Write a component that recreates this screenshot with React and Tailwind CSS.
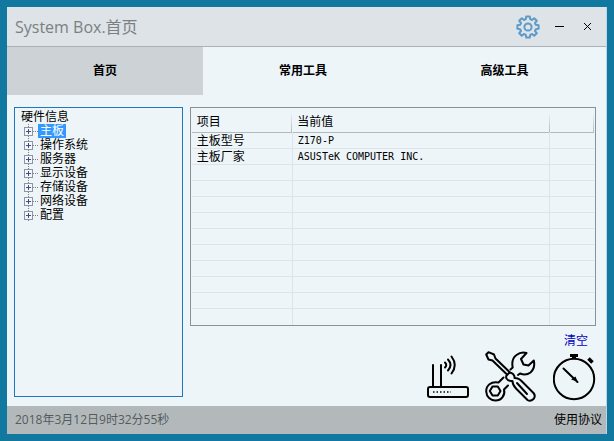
import React, { useState } from "react";

const tabs = ["首页", "常用工具", "高级工具"];

const hardware = [
  "主板",
  "操作系统",
  "服务器",
  "显示设备",
  "存储设备",
  "网络设备",
  "配置"
];

const details = [
  { name: "主板型号", value: "Z170-P" },
  { name: "主板厂家", value: "ASUSTeK COMPUTER INC." }
];

const ROW_COUNT = 12;

function GearIcon() {
  return (
    <svg width="24" height="24" viewBox="0 0 24 24" fill="none" stroke="#5f9ac8" strokeWidth="2" strokeLinejoin="round">
      <path d="M9.8 4.2 L10.2 1.4 H13.8 L14.2 4.2 L16 5 L18.2 3.200 L20.800 5.800 L19 8 L19.800 9.800 L22.600 10.200 V13.800 L19.800 14.200 L19 16 L20.800 18.200 L18.200 20.800 L16 19 L14.200 19.800 L13.800 22.600 H10.200 L9.800 19.800 L8 19 L5.800 20.800 L3.200 18.200 L5 16 L4.200 14.200 L1.400 13.800 V10.200 L4.200 9.800 L5 8 L3.200 5.800 L5.800 3.200 L8 5 Z" />
      <circle cx="12" cy="12" r="3.6" />
    </svg>
  );
}

function ExpandIcon() {
  return (
    <svg width="14" height="14" viewBox="0 0 14 14" shapeRendering="crispEdges">
      <path d="M4.5 0 V14 M9 7.5 H14" stroke="#808080" strokeDasharray="1 1" />
      <rect x="0.5" y="3.5" width="8" height="8" fill="#f4f6fb" stroke="#8f95a0" />
      <path d="M2 7.5 H7 M4.5 5 V10" stroke="#3c4f86" />
    </svg>
  );
}

function RouterIcon() {
  return (
    <svg width="42" height="44" viewBox="0 0 42 44" fill="none" stroke="#000" strokeWidth="2" strokeLinecap="round">
      <rect x="1" y="32" width="40" height="10" rx="2" />
      <path d="M6 10 V32 M14 10 V32" />
      <path d="M18 7.5 Q20.5 10 18 12.5 M21 4.5 Q26 10 21 15.5 M24.5 1.5 Q31 10 24.5 18.5" />
      <path d="M6 37 H24" strokeDasharray="1.5 2" strokeLinecap="butt" strokeWidth="1.5" />
    </svg>
  );
}

function ToolsIcon() {
  return (
    <svg width="52" height="52" viewBox="0 0 52 52" fill="none" stroke="#000" strokeWidth="2" strokeLinejoin="round" strokeLinecap="round">
      <path d="M24.5 21 L10.5 7.5 L9 3.500 L3.500 1.200 L1.200 3.500 L3.500 8.500 L7.500 9.500 L22 23.500" />
      <path d="M21.500 27.500 Q20.500 25.500 22 24 L24 22 Q26 21 28 23 Q30 25 29.500 27 Q34 27 37 30.500 L48.500 42 Q51 45 48.500 48 Q45.500 51 42.500 49 L31 37.500 Q27.500 34 27.500 30 Q23.500 30.500 21.500 27.500 Z" />
      <path d="M32 32 L42 43" />
      <path d="M25.500 18.500 L27.700 16.500 Q26 8 31.500 4 Q36 0.500 41.500 2 L36 8 L38.500 13.500 L43.500 14.500 L48.800 9.500 Q50.500 17 45.500 21.500 Q41 25 35 22.500 L33 24" />
      <path d="M18.500 26.500 L13.500 31.500 C6 30 1 34.500 1.200 40.500 C1.500 46 5.500 49.500 10.500 49.500 C16.500 49.500 20.500 44 19 38.500 L23 34.500" />
      <path d="M7.500 35.500 H12.800 L15.500 40 L12.800 44.500 H7.500 L4.800 40 Z" />
    </svg>
  );
}

function StopwatchIcon() {
  return (
    <svg width="43" height="48" viewBox="0 0 43 48" fill="none" stroke="#000" strokeWidth="2">
      <circle cx="21" cy="26" r="20.2" />
      <path d="M17 2.5 H25" strokeWidth="3" />
      <path d="M21 2 V6" strokeWidth="4" />
      <path d="M35.500 5.500 L39.500 9.500" strokeWidth="3.500" />
      <path d="M10.500 15.500 L24.500 29" strokeLinecap="round" />
      <path d="M18 26.500 L22.500 23.500 L24.500 28.500 Z" fill="#000" stroke="none" />
    </svg>
  );
}

export default function App() {
  const [activeTab, setActiveTab] = useState("首页");
  const [selected, setSelected] = useState("主板");
  const [rows, setRows] = useState(details);

  const emptyRows = ROW_COUNT - rows.length;

  return (
    <div className="min-h-screen flex bg-[#1178a0] p-[7px] text-black font-['Open_Sans','Noto_Sans_CJK_SC',sans-serif]">
      <div className="flex-1 flex flex-col bg-[#eef5f9] border-r border-[#b9d6e4]">
        <header className="h-10 flex items-center pl-2 pr-3 bg-[#dde3e6] border-b border-[#a8b2b8]">
          <h1 className="flex-1 text-base text-[#7b8084]">System Box.首页</h1>
          <button type="button" aria-label="设置" className="mr-3.5">
            <GearIcon />
          </button>
          <button type="button" aria-label="最小化" className="mr-4">
            <svg width="12" height="12" viewBox="0 0 12 12" stroke="#000">
              <path d="M1 5.5 H10" />
            </svg>
          </button>
          <button type="button" aria-label="关闭">
            <svg width="12" height="12" viewBox="0 0 12 12" stroke="#000">
              <path d="M2 2 L9 9 M9 2 L2 9" />
            </svg>
          </button>
        </header>

        <nav className="h-12 grid grid-cols-[196fr_200fr_203fr]">
          {tabs.map((tab) => (
            <button
              key={tab}
              type="button"
              onClick={() => setActiveTab(tab)}
              className={`text-xs font-bold ${activeTab === tab ? "bg-[#ccd2d6]" : ""}`}
            >
              {tab}
            </button>
          ))}
        </nav>

        <main className="flex-1 flex gap-[7px] pl-[7px] pr-2.5 pt-3">
          <section className="w-[29%] mb-[9px] pt-0.5 border border-[#1f78bd]">
            <h2 className="pl-1.5 text-xs leading-[14px]">硬件信息</h2>
            <ul className="pl-[9px]">
              {hardware.map((item) => (
                <li key={item} className="h-3.5">
                  <button
                    type="button"
                    onClick={() => setSelected(item)}
                    className="flex text-xs leading-[14px]"
                  >
                    <ExpandIcon />
                    <span className={`px-0.5 ${selected === item ? "bg-[#3399ff] text-white" : ""}`}>
                      {item}
                    </span>
                  </button>
                </li>
              ))}
            </ul>
          </section>

          <section className="flex-1 flex flex-col">
            <div className="px-px border border-[#8a9298]">
              <table className="w-full table-fixed border-collapse text-xs text-left">
                <colgroup>
                  <col className="w-[25%]" />
                  <col />
                  <col className="w-[11%]" />
                </colgroup>
                <thead>
                  <tr className="h-6 border-b border-[#b4bbbf]">
                    {["项目", "当前值", ""].map((title, idx) => (
                      <th key={idx} className="p-0 font-normal leading-5">
                        <div className="h-5 mt-1 pl-[5px] flex justify-between">
                          {title}
                          <span className="ml-auto w-px h-5 bg-linear-to-b from-[#eef5f9] to-[#b4bbbf]" />
                        </div>
                      </th>
                    ))}
                  </tr>
                </thead>
                <tbody>
                  {rows.map((row) => (
                    <tr key={row.name} className="h-4 border-b border-[#dde4e8]">
                      <td className="p-0 pl-[5px] leading-[15px] border-r border-[#dde4e8]">{row.name}</td>
                      <td className="p-0 pl-[5px] leading-[15px] border-r border-[#dde4e8] text-[10px] font-['DejaVu_Sans_Mono',monospace]">
                        {row.value}
                      </td>
                      <td className="p-0" />
                    </tr>
                  ))}
                  {Array.from({ length: emptyRows }, (_, idx) => (
                    <tr key={idx} className="h-4 border-b border-[#dde4e8] last:border-b-0">
                      <td className="p-0 border-r border-[#dde4e8]" />
                      <td className="p-0 border-r border-[#dde4e8]" />
                      <td className="p-0" />
                    </tr>
                  ))}
                </tbody>
              </table>
            </div>

            <button
              type="button"
              onClick={() => setRows([])}
              className="self-end mt-[7px] mr-2 text-xs text-[#0000c0]"
            >
              清空
            </button>
            <div className="flex justify-end items-center gap-4 mt-0.5">
              <button type="button" aria-label="网络工具">
                <RouterIcon />
              </button>
              <button type="button" aria-label="维修工具">
                <ToolsIcon />
              </button>
              <button type="button" aria-label="计时器">
                <StopwatchIcon />
              </button>
            </div>
          </section>
        </main>

        <footer className="h-7 flex items-center justify-between pl-2 pr-1 bg-[#b3b9bb] text-xs">
          <time dateTime="2018-03-12T09:32:55" className="text-[#555b5e]">
            2018年3月12日9时32分55秒
          </time>
          <a href="#agreement">使用协议</a>
        </footer>
      </div>
    </div>
  );
}
